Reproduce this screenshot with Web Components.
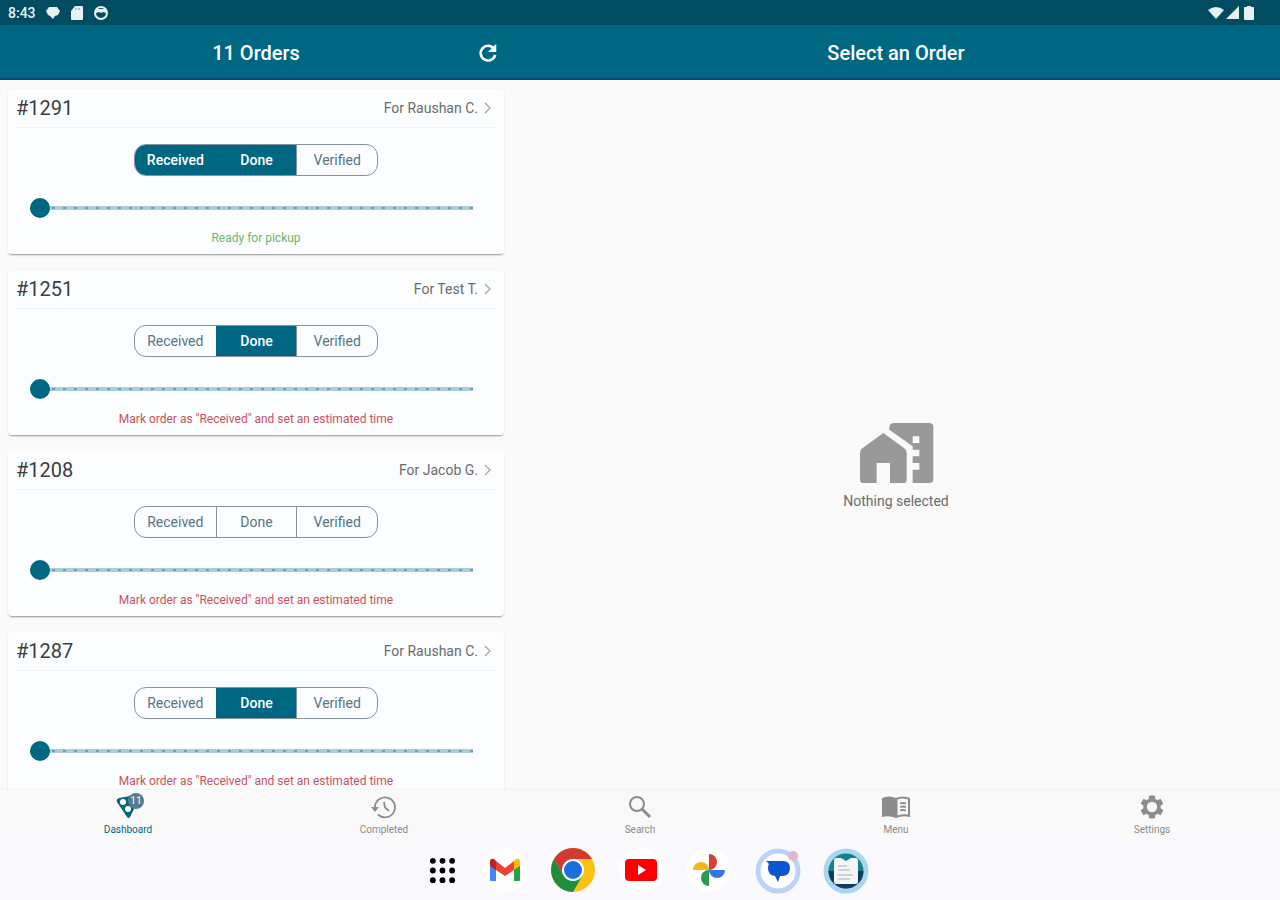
<!DOCTYPE html>
<html lang="en">
<head>
<meta charset="utf-8">
<meta name="viewport" content="width=device-width, initial-scale=1">
<title>Orders</title>
<style>
  html, body {
    height: 100%;
  }

  body {
    margin: 0;
    font-family: Roboto, "Liberation Sans", sans-serif;
    font-size: 14px;
    background: #fafafa;
    --primary: #006783;
    --primary-dark: #004d62;
  }
</style>
</head>
<body>
<orders-app></orders-app>

<script>
const orders = [
  { id: "#1291", name: "Raushan C.", active: "Received,Done", note: "Ready for pickup", ready: true },
  { id: "#1251", name: "Test T.", active: "Done" },
  { id: "#1208", name: "Jacob G.", active: "" },
  { id: "#1287", name: "Raushan C.", active: "Done" },
];

const defaultNote = 'Mark order as "Received" and set an estimated time';

customElements.define(
  "status-bar",
  class extends HTMLElement {
    constructor() {
      super();
      this.attachShadow({ mode: "open" });
      this.shadowRoot.innerHTML = `
        <style>
          :host {
            display: flex;
            align-items: center;
            justify-content: space-between;
            height: 25px;
            padding: 0 24px 0 8px;
            background: var(--primary-dark);
            color: #e8f0f3;
            font-size: 14px;
            font-weight: 500;
          }

          div {
            display: flex;
            align-items: center;
            gap: 10px;
          }

          .right {
            gap: 2px;
          }

          svg {
            display: block;
            fill: currentColor;
          }
        </style>
        <div>
          <span>8:43</span>
          <svg width="14" height="14" viewBox="0 0 14 14"><path d="M0 5 3 1h8l3 4-2 4-3 1-2 3-3-3-2-1z"/></svg>
          <svg width="14" height="14" viewBox="0 0 14 14"><path d="M5 0h7q1 0 1 1v12q0 1-1 1H2q-1 0-1-1V5z"/><path d="M6 2v2M9 2v2" stroke="#7c99a4"/></svg>
          <svg width="14" height="14" viewBox="0 0 14 14"><circle cx="7" cy="7" r="6" fill="none" stroke="currentColor" stroke-width="2"/><path d="M2 3h10v4l-3-1-2 1-2-1-3 1z"/></svg>
        </div>
        <div class="right">
          <svg width="16" height="14" viewBox="0 0 16 14"><path d="M0 4q8-6 16 0L8 13z"/></svg>
          <svg width="14" height="14" viewBox="0 0 14 14"><path d="M13 0v13H0z"/></svg>
          <svg width="14" height="14" viewBox="0 0 14 14"><path d="M5 0h4v1h2q1 0 1 1v11q0 1-1 1H3q-1 0-1-1V2q0-1 1-1h2z"/></svg>
        </div>
      `;
    }
  }
);

customElements.define(
  "app-header",
  class extends HTMLElement {
    constructor() {
      super();
      this.attachShadow({ mode: "open" });
      this.shadowRoot.innerHTML = `
        <style>
          :host {
            display: grid;
            grid-template-columns: 2fr 3fr;
            height: 55px;
            background: var(--primary);
            box-shadow: inset 0 -2px #004a70;
            color: #fff;
          }

          .side {
            display: grid;
            grid-template-columns: 1fr auto 1fr;
            align-items: center;
          }

          ::slotted(h1) {
            grid-column: 2;
            margin: 0;
            font-size: 20px;
            line-height: 24px;
            font-weight: 500;
          }

          ::slotted(button) {
            grid-column: 3;
            justify-self: end;
            display: grid;
            place-items: center;
            width: 48px;
            height: 48px;
            padding: 0;
            border: none;
            background: transparent;
            color: inherit;
          }
        </style>
        <div class="side"><slot name="list"></slot></div>
        <div class="side"><slot name="detail"></slot></div>
      `;
    }
  }
);

customElements.define(
  "order-steps",
  class extends HTMLElement {
    connectedCallback() {
      const active = this.getAttribute("active").split(",");
      this.attachShadow({ mode: "open" });
      this.shadowRoot.innerHTML = `
        <style>
          :host {
            display: grid;
            grid-template-columns: repeat(3, 1fr);
            box-sizing: border-box;
            width: 244px;
            height: 32px;
            border: 1px solid #84939c;
            border-radius: 12px;
            overflow: hidden;
          }

          button {
            padding: 0;
            border: none;
            border-left: 1px solid #84939c;
            background: transparent;
            color: #557784;
            font-family: inherit;
            font-size: 14px;
          }

          button:first-of-type {
            border-left: none;
          }

          button[aria-pressed="true"] {
            border-color: var(--primary);
            background: var(--primary);
            color: #fff;
            font-weight: 500;
          }
        </style>
        ${["Received", "Done", "Verified"]
          .map((step) => `<button type="button" aria-pressed="${active.includes(step)}">${step}</button>`)
          .join("")}
      `;

      this.shadowRoot.querySelectorAll("button").forEach((button) => {
        button.addEventListener("click", () => {
          const pressed = button.getAttribute("aria-pressed") === "true";
          button.setAttribute("aria-pressed", String(!pressed));
        });
      });
    }
  }
);

customElements.define(
  "order-card",
  class extends HTMLElement {
    connectedCallback() {
      this.attachShadow({ mode: "open" });
      this.shadowRoot.innerHTML = `
        <style>
          :host {
            display: flex;
            flex-direction: column;
            align-items: center;
            flex: none;
            padding: 0 8px 8px;
            background: #fbfdfe;
            border-radius: 4px;
            box-shadow: 0 2px 2px -1px rgba(0, 0, 0, 0.4), 0 0 2px rgba(0, 0, 0, 0.06);
          }

          header {
            display: flex;
            align-items: center;
            justify-content: space-between;
            align-self: stretch;
            box-sizing: border-box;
            height: 39px;
            border-bottom: 1px solid #f1f4f5;
          }

          ::slotted(h2) {
            margin: 0;
            font-size: 20px;
            font-weight: 400;
            color: #3c3e40;
          }

          .customer {
            display: flex;
            align-items: center;
            gap: 6px;
            padding-right: 4px;
            color: #6c6c6c;
            font-size: 14px;
            text-decoration: none;
          }

          order-steps {
            margin-top: 16px;
          }

          label {
            align-self: stretch;
            display: flex;
            margin-top: 22px;
            padding: 0 23px 0 14px;
          }

          input {
            appearance: none;
            flex: 1;
            min-width: 0;
            height: 20px;
            margin: 0;
            background:
              repeating-linear-gradient(90deg, #6ba3b5 0 3px, transparent 3px 11px) center / 100% 2px no-repeat,
              linear-gradient(#a9cdda, #a9cdda) center / 100% 4px no-repeat;
          }

          input::-webkit-slider-thumb {
            appearance: none;
            width: 20px;
            height: 20px;
            border-radius: 50%;
            background: var(--primary);
          }

          .note {
            margin-top: 12px;
            color: #c9525c;
            font-size: 12px;
            line-height: 16px;
          }

          :host([ready]) .note {
            color: #6ab86d;
          }
        </style>
        <header>
          <slot name="number"></slot>
          <a class="customer" href="#">
            <slot name="customer"></slot>
            <svg width="8" height="14" viewBox="0 0 8 14" fill="none" stroke="#a6a6a6" stroke-width="1.3"><path d="m1 2 5 5-5 5"/></svg>
          </a>
        </header>
        <order-steps role="group" aria-label="Order status" active="${this.getAttribute("active")}"></order-steps>
        <label><input type="range" min="0" max="60" value="0" aria-label="Estimated time"></label>
        <div class="note"><slot name="note"></slot></div>
      `;
    }
  }
);

customElements.define(
  "empty-state",
  class extends HTMLElement {
    constructor() {
      super();
      this.attachShadow({ mode: "open" });
      this.shadowRoot.innerHTML = `
        <style>
          :host {
            display: flex;
            flex-direction: column;
            align-items: center;
            justify-content: center;
            padding-top: 52px;
            color: #6c6c6c;
            font-size: 14px;
            line-height: 16px;
          }
        </style>
        <svg width="80" height="80" viewBox="0 0 24 24" fill="#999">
          <path d="M1.200 12q0-1 .8-1.500L8.200 6l6.200 4.500q.8.500.8 1.500v8q0 1-1 1h-4v-6h-4v6h-4q-1 0-1-1z"/>
          <path fill-rule="evenodd" d="M11.500 3H22q1.200 0 1.200 1.200v15.600Q23.200 21 22 21h-5v-4h2v-2h-2v-2h2v-2h-2V9.970L10 5V4.500Q10 3 11.500 3zM17 7v2h2V7z"/>
        </svg>
        <slot></slot>
      `;
    }
  }
);

customElements.define(
  "nav-item",
  class extends HTMLElement {
    constructor() {
      super();
      this.attachShadow({ mode: "open" });
      this.shadowRoot.innerHTML = `
        <style>
          :host {
            display: block;
            color: #8c8c8c;
          }

          :host([current]) {
            color: var(--primary);
          }

          a {
            display: flex;
            flex-direction: column;
            align-items: center;
            gap: 5px;
            padding-top: 5px;
            color: inherit;
            font-size: 10px;
            line-height: 12px;
            text-decoration: none;
          }

          .icon {
            position: relative;
            height: 24px;
          }

          ::slotted(svg) {
            display: block;
            fill: currentColor;
          }

          ::slotted(b) {
            position: absolute;
            top: -2px;
            right: -4px;
            width: 16px;
            border-radius: 8px;
            background: #567c8b;
            color: #dfe8eb;
            font-size: 10px;
            line-height: 16px;
            font-weight: 500;
            text-align: center;
          }
        </style>
        <a href="#"><span class="icon"><slot name="icon"></slot></span><slot></slot></a>
      `;
    }
  }
);

customElements.define(
  "dock-button",
  class extends HTMLElement {
    constructor() {
      super();
      this.attachShadow({ mode: "open" });
      this.shadowRoot.innerHTML = `
        <style>
          :host {
            display: block;
          }

          button {
            display: grid;
            place-items: center;
            width: 44px;
            height: 44px;
            padding: 0;
            border: none;
            border-radius: 50%;
            background: #fff;
          }

          :host([plain]) button {
            width: 34px;
            background: transparent;
          }
        </style>
        <button type="button" aria-label="${this.getAttribute("label")}"><slot></slot></button>
      `;
    }
  }
);

customElements.define(
  "orders-app",
  class extends HTMLElement {
    constructor() {
      super();
      this.attachShadow({ mode: "open" });
      this.shadowRoot.innerHTML = `
        <style>
          :host {
            display: flex;
            flex-direction: column;
            height: 100vh;
          }

          main {
            flex: 1;
            min-height: 0;
            display: grid;
            grid-template-columns: 2fr 3fr;
            grid-template-rows: minmax(0, 1fr);
          }

          .list {
            display: flex;
            flex-direction: column;
            gap: 16px;
            padding: 9px 8px;
            overflow-y: auto;
            scrollbar-width: none;
          }

          nav {
            position: relative;
            display: grid;
            grid-template-columns: repeat(5, 1fr);
            height: 50px;
            background: #f9f9fa;
            box-shadow: 0 -1px 2px rgba(0, 0, 0, 0.04);
          }

          footer {
            position: relative;
            display: flex;
            align-items: center;
            justify-content: center;
            gap: 24px;
            height: 60px;
            padding-left: 12px;
            background: #f9f9fe;
          }

          svg {
            display: block;
          }
        </style>

        <status-bar></status-bar>
        <app-header>
          <h1 slot="list">11 Orders</h1>
          <button slot="list" type="button" aria-label="Refresh">
            <svg width="22" height="22" viewBox="0 0 24 24"><path d="M18.500 7.500A8 8 0 1 0 19.800 14" fill="none" stroke="#fff" stroke-width="2.800"/><path d="M21 2v9h-9z" fill="#fff"/></svg>
          </button>
          <h1 slot="detail">Select an Order</h1>
        </app-header>

        <main>
          <section class="list">
            ${orders
              .map(
                (order) => `
              <order-card active="${order.active}" ${order.ready ? "ready" : ""}>
                <h2 slot="number">${order.id}</h2>
                <span slot="customer">For ${order.name}</span>
                <span slot="note">${order.note || defaultNote}</span>
              </order-card>`
              )
              .join("")}
          </section>
          <empty-state>Nothing selected</empty-state>
        </main>

        <nav>
          <nav-item current>
            <svg slot="icon" width="24" height="24" viewBox="0 0 24 24">
              <path d="M3 3 14 1q8 0 8 4 0 3-3 7l-5 10q-1 2-3 0L1 7Q0 4 3 3z"/>
              <circle cx="7" cy="7" r="3" fill="#fff"/><circle cx="12" cy="14" r="3" fill="#fff"/>
            </svg>
            <b slot="icon">11</b>Dashboard
          </nav-item>
          <nav-item>
            <svg slot="icon" width="26" height="24" viewBox="0 0 26 24">
              <path d="M4 13A10 10 0 1 1 7 19.500M13 7l1 5.500 4 3.500" fill="none" stroke="currentColor" stroke-width="1.800"/>
              <path d="M0 12h8l-4 5z"/>
            </svg>Completed
          </nav-item>
          <nav-item>
            <svg slot="icon" width="24" height="24" viewBox="0 0 24 24">
              <circle cx="9" cy="9" r="7" fill="none" stroke="currentColor" stroke-width="2"/>
              <path d="m14 14 8 8" stroke="currentColor" stroke-width="3"/>
            </svg>Search
          </nav-item>
          <nav-item>
            <svg slot="icon" width="28" height="24" viewBox="0 0 28 24">
              <path d="M0 3q7-3 14 0 7-3 14 0v19q-7-2-14 1-7-3-14-1z"/>
              <path d="M15.500 4.500q5-2 10.500 0v15q-5-1-10.500 1z" fill="#f9f9fa"/>
              <path d="M18 8.500q3-1 6 0M18 12q3-1 6 0M18 15.500q3-1 6 0" fill="none" stroke="currentColor" stroke-width="1.800"/>
            </svg>Menu
          </nav-item>
          <nav-item>
            <svg slot="icon" width="28" height="24" viewBox="1 2 22 20">
              <path d="M19.140 12.940c.04-.3.060-.61.060-.94 0-.32-.02-.64-.07-.94l2.030-1.580c.18-.14.23-.41.120-.61l-1.920-3.320c-.12-.22-.37-.29-.59-.22l-2.390.96c-.5-.38-1.030-.7-1.620-.94l-.36-2.540c-.04-.24-.24-.41-.48-.41h-3.840c-.24 0-.43.170-.47.410l-.36 2.540c-.59.240-1.130.570-1.620.940l-2.390-.96c-.22-.08-.47 0-.59.220L2.740 8.870c-.12.210-.08.470.120.610l2.030 1.580c-.05.3-.09.630-.09.940s.02.640.07.940l-2.030 1.580c-.18.140-.23.410-.12.610l1.920 3.320c.12.220.37.290.59.220l2.390-.96c.5.380 1.030.7 1.620.94l.36 2.540c.05.240.24.410.48.410h3.840c.24 0 .44-.17.470-.41l.36-2.540c.59-.24 1.130-.56 1.620-.94l2.390.96c.22.080.47 0 .59-.22l1.920-3.320c.12-.22.070-.47-.12-.61l-2.010-1.580zM12 16.300a4.300 4.300 0 1 1 0-8.600 4.300 4.300 0 0 1 0 8.600z"/>
            </svg>Settings
          </nav-item>
        </nav>

        <footer>
          <dock-button plain label="All apps">
            <svg width="27" height="27" viewBox="0 0 28 28">
              ${[4, 14, 24].map((y) => [4, 14, 24].map((x) => `<circle cx="${x}" cy="${y}" r="3"/>`).join("")).join("")}
            </svg>
          </dock-button>
          <dock-button label="Gmail">
            <svg width="32" height="24" viewBox="0 0 32 24">
              <path d="M1 5v17q0 1 1 1h5V9z" fill="#4285f4"/><path d="M31 5v17q0 1-1 1h-5V9z" fill="#26a148"/>
              <path d="M25 3v9l6-4V4q0-4-4-3z" fill="#fbbc04"/><path d="M7 3v9L1 8V4q0-4 4-3z" fill="#c5221f"/>
              <path d="M7 3v9l9 6 9-6V3l-9 7z" fill="#ea4335"/>
            </svg>
          </dock-button>
          <dock-button label="Chrome">
            <svg width="44" height="44" viewBox="0 0 44 44">
              <circle cx="22" cy="22" r="22" fill="#fbc116"/>
              <path d="M3 11A22 22 0 0 1 41 11H22L12.500 27.500z" fill="#d03a2f"/>
              <path d="M3 11A22 22 0 0 0 22 44L31.500 27.500 12.500 27.500z" fill="#1e8e3e"/>
              <circle cx="22" cy="22" r="11" fill="#fff"/><circle cx="22" cy="22" r="9" fill="#1a6fe0"/>
            </svg>
          </dock-button>
          <dock-button label="YouTube">
            <svg width="32" height="22" viewBox="0 0 32 22"><rect width="32" height="22" rx="4" fill="#f00"/><path d="m13 6 8 5-8 5z" fill="#fff"/></svg>
          </dock-button>
          <dock-button label="Photos">
            <svg width="32" height="32" viewBox="0 0 32 32">
              <path d="M16 0a8 8 0 0 1 0 16z" fill="#dc3e32"/><path d="M32 16a8 8 0 0 1-16 0z" fill="#2f77e8"/>
              <path d="M16 32a8 8 0 0 1 0-16z" fill="#289c48"/><path d="M0 16a8 8 0 0 1 16 0z" fill="#f6b51b"/>
            </svg>
          </dock-button>
          <dock-button label="Messages">
            <svg width="46" height="46" viewBox="0 0 46 46">
              <circle cx="23" cy="23" r="20" fill="#fff" stroke="#bcd3f7" stroke-width="5"/>
              <path d="M11 13h17q7 0 7 7t-7 8h-3l-2 6-3-6q-7-1-7-8 0-3 1-4z" fill="#0b57d0"/>
              <circle cx="38" cy="8" r="5" fill="#dfb6d3"/>
            </svg>
          </dock-button>
          <dock-button label="Orders">
            <svg width="46" height="46" viewBox="0 0 46 46">
              <circle cx="23" cy="23" r="20" fill="#14818c" stroke="#a9d6f1" stroke-width="5"/>
              <path d="M5.500 23a17.500 17.500 0 0 0 35 0z" fill="#123c5c"/>
              <path d="M13 10h5l5 3 5-3h5q2 0 2 2v22q0 2-2 2H13q-2 0-2-2V12q0-2 2-2z" fill="#f4f5f7"/>
              <path d="M15 18h9M15 22h12M15 27h15M15 31h12" stroke="#a9b3bb" stroke-width="1.200"/>
            </svg>
          </dock-button>
        </footer>
      `;
    }
  }
);
</script>
</body>
</html>
